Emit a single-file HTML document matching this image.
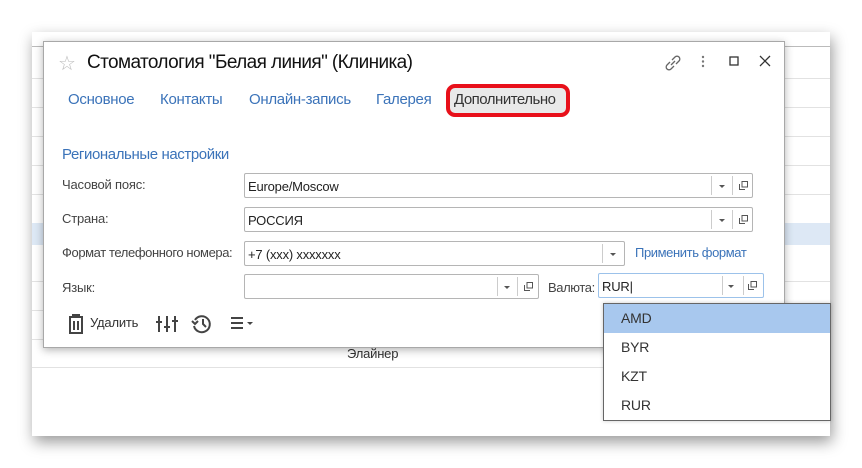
<!DOCTYPE html>
<html><head><meta charset="utf-8"><style>
*{margin:0;padding:0;box-sizing:border-box}
body{width:862px;height:468px;background:#fff;position:relative;overflow:hidden;font-family:"Liberation Sans",sans-serif;font-size:13px;color:#333;letter-spacing:-0.2px}
.a{position:absolute}
.page{left:32px;top:32px;width:798px;height:404px;background:#fff;box-shadow:2px 6px 14px rgba(0,0,0,.4)}
.hl{background:#e2e2e2;height:1px;left:32px;width:798px}
.dlg{left:43px;top:41px;width:742px;height:307px;background:#fff;border:1px solid #a8a8a8;box-shadow:0 2px 8px rgba(0,0,0,.3)}
.tab{color:#3b73b9;font-size:15px;top:91px;letter-spacing:-0.3px}
.lbl{left:62px;color:#444}
.fld{border:1px solid #b5b5b5;border-radius:2px;background:#fff;height:25px}
.fld span{position:absolute;left:3px;top:5px;color:#222}
.dv{position:absolute;top:2px;bottom:2px;width:1px;background:#ccc}
.arr{position:absolute;top:11px;width:0;height:0;border-left:3px solid transparent;border-right:3px solid transparent;border-top:3px solid #555}
.cp{position:absolute;top:7px;width:9px;height:9px}
.it{left:621px;font-size:14px;color:#333}
</style></head><body>
<div class="a page"></div>
<div class="a hl" style="top:46px;background:#bbb"></div>
<div class="a hl" style="top:78px"></div>
<div class="a hl" style="top:107px"></div>
<div class="a hl" style="top:136px"></div>
<div class="a hl" style="top:165px"></div>
<div class="a hl" style="top:194px"></div>
<div class="a" style="left:32px;top:223px;width:798px;height:22px;background:#dde8f5"></div>
<div class="a hl" style="top:281px"></div>
<div class="a hl" style="top:310px"></div>
<div class="a hl" style="top:339px"></div>
<div class="a hl" style="top:367px"></div>
<div class="a" style="left:347px;top:346px;color:#333">Элайнер</div>

<div class="a dlg"></div>
<div class="a" style="left:58px;top:51px;font-size:20px;color:#bbb">☆</div>
<div class="a" style="left:87px;top:52px;font-size:19px;color:#111;letter-spacing:-0.6px">Стоматология "Белая линия" (Клиника)</div>
<svg class="a" style="left:660px;top:50px" width="120" height="24" viewBox="0 0 120 24">
<g fill="none" stroke="#666" stroke-width="1.3">
<path d="M10 12 l-3 3 a2.5 2.5 0 0 0 4 4 l3-3 M12 10 l3-3 a2.5 2.5 0 0 1 4 4 l-3 3 M11 15 l4-4"/>
<rect x="70" y="7" width="8" height="8" stroke="#333"/>
<path d="M100 6 l10 10 M110 6 l-10 10" stroke="#333"/>
</g>
<g fill="#777"><circle cx="43" cy="7" r="1.2"/><circle cx="43" cy="11.5" r="1.2"/><circle cx="43" cy="16" r="1.2"/></g>
</svg>

<div class="a tab" style="left:68px">Основное</div>
<div class="a tab" style="left:160px">Контакты</div>
<div class="a tab" style="left:249px">Онлайн-запись</div>
<div class="a tab" style="left:376px">Галерея</div>
<div class="a" style="left:446px;top:84px;width:124px;height:33px;border:4px solid #e8101a;border-radius:9px;background:#e9e9e9"></div>
<div class="a" style="left:454px;top:91px;font-size:15px;color:#333;letter-spacing:-0.5px">Дополнительно</div>

<div class="a" style="left:62px;top:146px;font-size:15px;color:#3b73b9;letter-spacing:-0.4px">Региональные настройки</div>

<div class="a lbl" style="top:177px">Часовой пояс:</div>
<div class="a fld" style="left:244px;top:173px;width:509px"><span>Europe/Moscow</span><div class="dv" style="left:466px"></div><div class="arr" style="left:474px"></div><div class="dv" style="left:487px"></div><svg class="cp" style="left:494px" viewBox="0 0 9 9"><path d="M3 .5h5.5v5.5H3z M.5 3v5.5H6" fill="none" stroke="#555"/></svg></div>

<div class="a lbl" style="top:211px">Страна:</div>
<div class="a fld" style="left:244px;top:207px;width:509px"><span>РОССИЯ</span><div class="dv" style="left:466px"></div><div class="arr" style="left:474px"></div><div class="dv" style="left:487px"></div><svg class="cp" style="left:494px" viewBox="0 0 9 9"><path d="M3 .5h5.5v5.5H3z M.5 3v5.5H6" fill="none" stroke="#555"/></svg></div>

<div class="a lbl" style="top:245px;letter-spacing:-0.4px">Формат телефонного номера:</div>
<div class="a fld" style="left:244px;top:241px;width:381px"><span>+7 (xxx) xxxxxxx</span><div class="dv" style="left:357px"></div><div class="arr" style="left:365px"></div></div>
<div class="a" style="left:635px;top:245px;color:#3b73b9;letter-spacing:-0.4px">Применить формат</div>

<div class="a lbl" style="top:280px">Язык:</div>
<div class="a fld" style="left:244px;top:274px;width:295px"><div class="dv" style="left:252px"></div><div class="arr" style="left:259px"></div><div class="dv" style="left:272px"></div><svg class="cp" style="left:279px" viewBox="0 0 9 9"><path d="M3 .5h5.5v5.5H3z M.5 3v5.5H6" fill="none" stroke="#555"/></svg></div>
<div class="a" style="left:548px;top:280px;color:#444;letter-spacing:-0.4px">Валюта:</div>
<div class="a fld" style="left:598px;top:273px;width:166px;border-color:#9cc2ea"><span>RUR|</span><div class="dv" style="left:123px"></div><div class="arr" style="left:129px"></div><div class="dv" style="left:144px"></div><svg class="cp" style="left:149px" viewBox="0 0 9 9"><path d="M3 .5h5.5v5.5H3z M.5 3v5.5H6" fill="none" stroke="#555"/></svg></div>

<svg class="a" style="left:64px;top:312px" width="200" height="24" viewBox="0 0 200 24">
<g fill="none" stroke="#444" stroke-width="2">
<path d="M5 5h14 M9 5V3h6v2 M6 6v15h12V6 M10 9v9 M14 9v9"/>
<path d="M95 4v16 M103 4v16 M111 4v16 M92 10h6 M100 15h6 M108 9h6"/>
<path d="M131 8 a8 8 0 1 1 -1 6 M128 9l3 3 3-3 M139 7v5l3 3"/>
<path d="M167 6h12 M167 11h12 M167 16h12"/>
</g>
<path d="M183 10l3 3 3-3z" fill="#444"/>
</svg>
<div class="a" style="left:90px;top:315px;color:#333">Удалить</div>

<div class="a" style="left:603px;top:303px;width:228px;height:118px;background:#fff;border:1px solid #666;box-shadow:0 0 4px rgba(0,0,0,.2)"></div>
<div class="a" style="left:604px;top:304px;width:226px;height:29px;background:#a8c8ee"></div>
<div class="a it" style="top:310px">AMD</div>
<div class="a it" style="top:339px">BYR</div>
<div class="a it" style="top:368px">KZT</div>
<div class="a it" style="top:397px">RUR</div>
</body></html>
